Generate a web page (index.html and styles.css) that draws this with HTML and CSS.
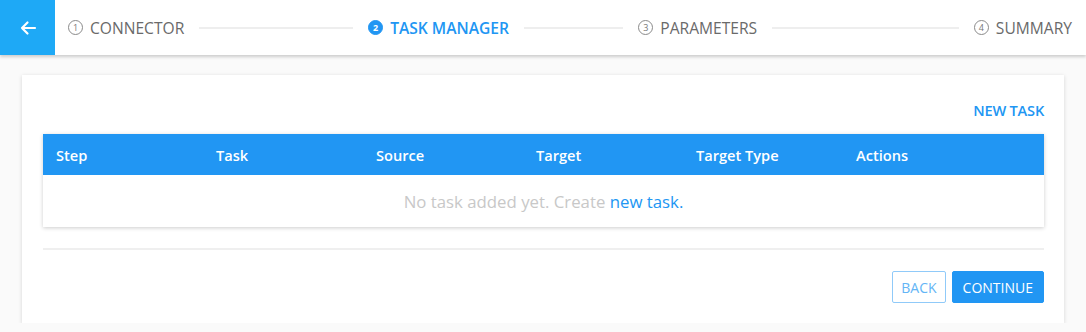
FILE: index.html
```html
<!DOCTYPE html>
<html lang="en">
<head>
  <meta charset="UTF-8" />
  <title>Task Manager</title>
  <link rel="stylesheet" href="styles.css">
</head>
<body>

  <!-- Stepper -->
  <div class="stepper">
    <button class="back-btn">
      <svg width="18" height="18" viewBox="0 0 18 18"><path d="M16 9H3M8.5 3.5L3 9l5.5 5.5" fill="none" stroke="#fff" stroke-width="2.2" stroke-linecap="round" stroke-linejoin="round"/></svg>
    </button>
    <div class="steps">
      <div class="step"><span class="num">1</span>CONNECTOR</div>
      <div class="line line-1"></div>
      <div class="step active"><span class="num">2</span>TASK MANAGER</div>
      <div class="line line-2"></div>
      <div class="step"><span class="num">3</span>PARAMETERS</div>
      <div class="line line-3"></div>
      <div class="step"><span class="num">4</span>SUMMARY</div>
    </div>
  </div>

  <!-- Card -->
  <div class="card">
    <div class="card-top">
      <a class="new-task">NEW TASK</a>
    </div>
    <table>
      <thead>
        <tr>
          <th>Step</th>
          <th>Task</th>
          <th>Source</th>
          <th>Target</th>
          <th>Target Type</th>
          <th>Actions</th>
        </tr>
      </thead>
      <tbody>
        <tr>
          <td colspan="6" class="empty">No task added yet. Create <a>new task.</a></td>
        </tr>
      </tbody>
    </table>
    <div class="divider"></div>
    <div class="actions">
      <button class="btn btn-outline">BACK</button>
      <button class="btn btn-primary">CONTINUE</button>
    </div>
  </div>

</body>
</html>
```

FILE: styles.css
```css
body {
  margin: 0;
  background: #fafafa;
  font-family: 'Open Sans', sans-serif;
  color: #666;
}

.stepper {
  display: flex;
  height: 55px;
  background: white;
  box-shadow: 0 2px 3px rgba(0, 0, 0, 0.18);
}

.back-btn {
  width: 55px;
  height: 55px;
  border: none;
  background: #1ea9f6;
  display: flex;
  align-items: center;
  justify-content: center;
  padding: 0;
}

.steps {
  flex: 1;
  display: flex;
  align-items: center;
  padding: 0 14px 0 13px;
}

.step {
  display: flex;
  align-items: center;
  font-size: 15.6px;
  color: #6a6a6a;
  white-space: nowrap;
}

.num {
  width: 13px;
  height: 13px;
  border: 1px solid #8a8a8a;
  border-radius: 50%;
  font-size: 9px;
  line-height: 13px;
  text-align: center;
  margin-right: 7px;
  color: #777;
}

.step.active {
  color: #2196f3;
  font-weight: 600;
}

.step.active .num {
  background: #2196f3;
  border-color: #2196f3;
  color: white;
  font-weight: 700;
}

.line {
  height: 2px;
  background: #eeeeee;
  margin: 0 15px;
}

.line-1 { flex: 155 1 0; }
.line-2 { flex: 100 1 0; }
.line-3 { flex: 188 1 0; }

.card {
  margin: 20px 22px 0;
  background: white;
  padding: 21px 20px 20px 21px;
  box-shadow: 0 1px 4px rgba(0, 0, 0, 0.15);
}

.card-top {
  text-align: right;
  height: 28px;
  line-height: 28px;
  margin-bottom: 10px;
}

.new-task {
  color: #2196f3;
  font-size: 14.6px;
  font-weight: 600;
  letter-spacing: -0.2px;
  cursor: pointer;
}

table {
  width: 100%;
  border-collapse: collapse;
  box-shadow: 0 1px 4px rgba(0, 0, 0, 0.2);
}

th {
  background: #2196f3;
  color: white;
  font-size: 14.6px;
  font-weight: 600;
  text-align: left;
  height: 41px;
  padding: 0 13px;
  width: 134px;
}

th:last-child {
  width: auto;
}

td.empty {
  height: 52px;
  text-align: center;
  font-size: 16.8px;
  color: #c8c8c8;
  padding: 0;
}

td.empty a {
  color: #2196f3;
}

.divider {
  height: 2px;
  background: #efefef;
  margin: 21px 0 21px;
}

.actions {
  display: flex;
  justify-content: flex-end;
  gap: 6px;
}

.btn {
  height: 32px;
  font-family: 'Open Sans', sans-serif;
  font-size: 14px;
  border-radius: 2px;
  padding: 0 10px;
  cursor: pointer;
}

.btn-outline {
  background: white;
  border: 1px solid #90caf9;
  color: #64b5f6;
  padding: 0 8px;
}

.btn-primary {
  background: #2196f3;
  border: 1px solid #2196f3;
  color: white;
}
```
